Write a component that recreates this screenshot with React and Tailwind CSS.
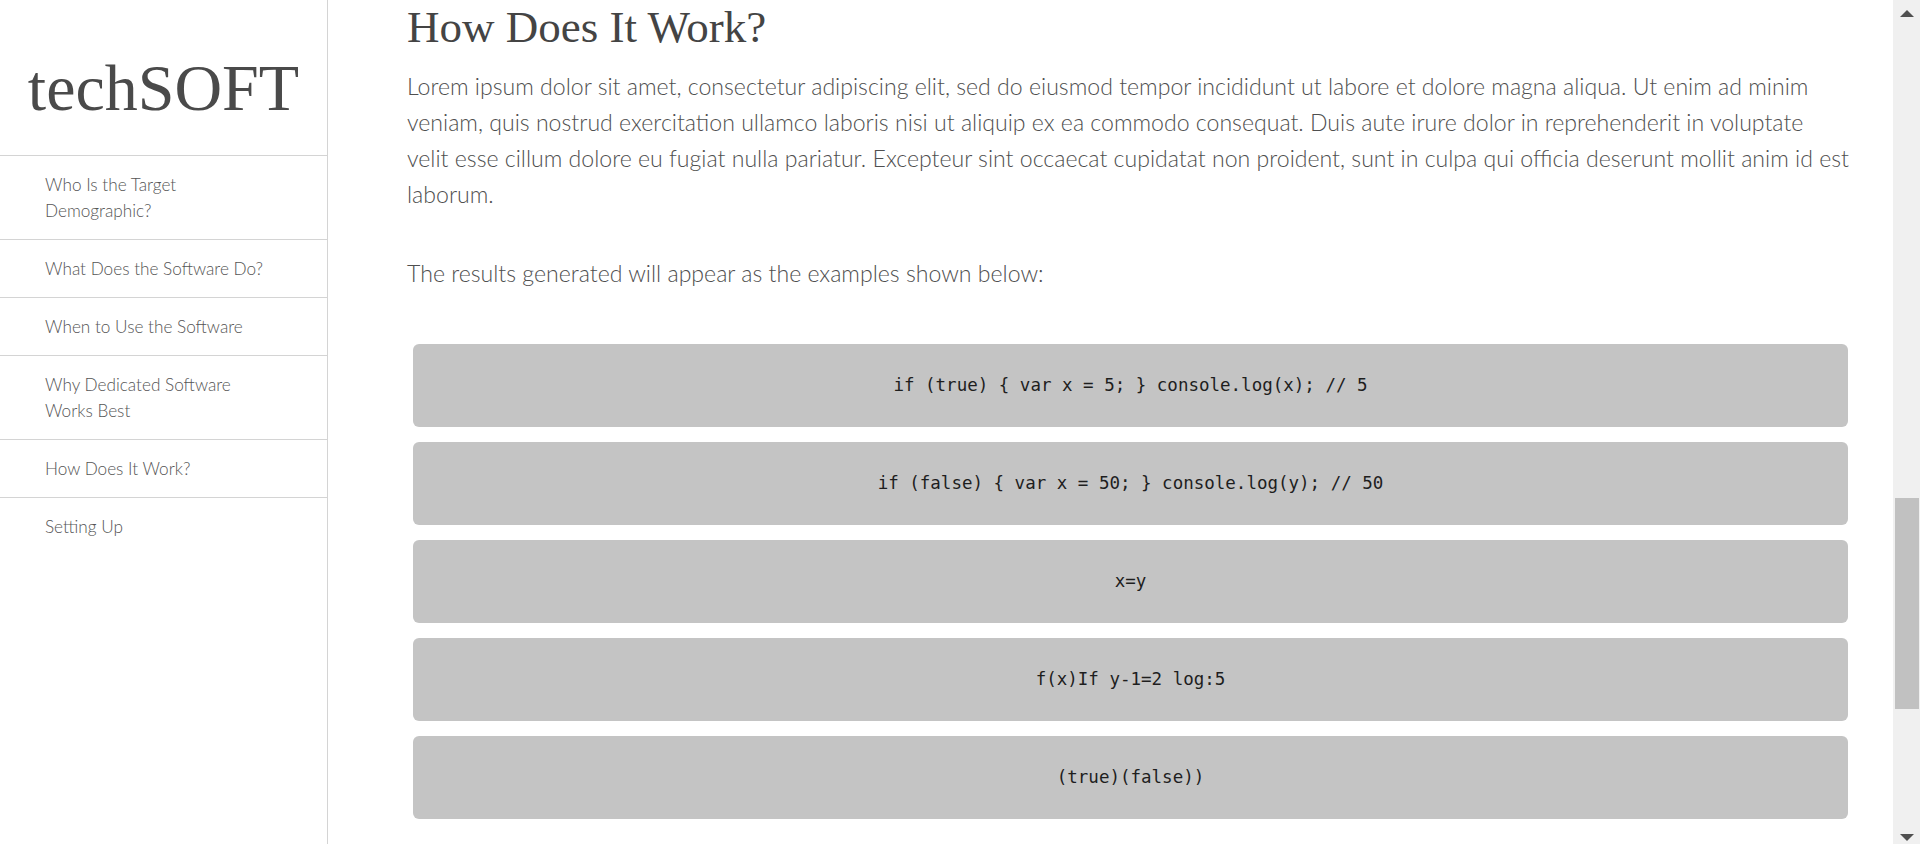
import React from 'react';

const navItems = [
    'Who Is the Target Demographic?',
    'What Does the Software Do?',
    'When to Use the Software',
    'Why Dedicated Software Works Best',
    'How Does It Work?',
    'Setting Up',
];

const examples = [
    'if (true) { var x = 5; } console.log(x); // 5',
    'if (false) { var x = 50; } console.log(y); // 50',
    'x=y',
    'f(x)If y-1=2 log:5',
    '(true)(false))',
];

function Sidebar() {
    return (
        <aside className="w-[328px] shrink-0 border-r border-[#d4d4d4] bg-white">
            {/* Logo */}
            <div className="h-[156px] border-b border-[#d4d4d4] pt-[50px] text-center">
                <span className="text-[66px] leading-[76px] text-[#4a4a4a] font-['Liberation_Serif',serif]">
                    techSOFT
                </span>
            </div>

            {/* Nav */}
            <nav>
                {navItems.map((item, idx) => (
                    <a
                        key={item}
                        href="#"
                        className={`block px-[45px] py-[15.5px] text-[17.2px] leading-[26px] font-light text-[#555] font-['Lato',sans-serif] ${
                            idx < navItems.length - 1 ? 'border-b border-[#d4d4d4]' : ''
                        }`}
                    >
                        {item}
                    </a>
                ))}
            </nav>
        </aside>
    );
}

function Scrollbar() {
    return (
        <div className="w-[27px] shrink-0 bg-[#f0f0f0] flex flex-col items-center pt-[10px] pb-[3px]">
            <svg width="14" height="7" viewBox="0 0 14 7">
                <polygon points="0,7 7,0 14,7" fill="#505050" />
            </svg>
            <div className="mt-[481px] h-[211px] w-[24px] bg-[#c1c1c1]"></div>
            <div className="flex-1"></div>
            <svg width="14" height="7" viewBox="0 0 14 7">
                <polygon points="0,0 14,0 7,7" fill="#505050" />
            </svg>
        </div>
    );
}

export default function App() {
    return (
        <div className="flex h-[844px] w-full overflow-hidden bg-white">
            <Sidebar />

            <main className="flex-1 min-w-0 pl-[79px] pr-[37px] pt-[2px] font-['Lato',sans-serif]">
                <h1 className="text-[45px] leading-[50px] text-[#444] font-['Liberation_Serif',serif]">
                    How Does It Work?
                </h1>

                <p className="mt-[16px] text-[23.1px] leading-[36px] font-light text-[#4f4f4f]">
                    Lorem ipsum dolor sit amet, consectetur adipiscing elit, sed do eiusmod tempor incididunt ut labore et dolore magna aliqua. Ut enim ad minim veniam, quis nostrud exercitation ullamco laboris nisi ut aliquip ex ea commodo consequat. Duis aute irure dolor in reprehenderit in voluptate<br />
                    velit esse cillum dolore eu fugiat nulla pariatur. Excepteur sint occaecat cupidatat non proident, sunt in culpa qui officia deserunt mollit anim id est laborum.
                </p>

                <p className="mt-[43px] text-[23.1px] leading-[36px] font-light text-[#4f4f4f]">
                    The results generated will appear as the examples shown below:
                </p>

                {/* Examples */}
                <div className="mt-[53px] ml-[6px] mr-[8px] flex flex-col gap-[15px]">
                    {examples.map((code) => (
                        <div
                            key={code}
                            className="h-[83px] rounded-[6px] bg-[#c4c4c4] flex items-center justify-center"
                        >
                            <code className="text-[17.5px] text-[#1e1e1e] whitespace-pre font-['DejaVu_Sans_Mono',monospace]">
                                {code}
                            </code>
                        </div>
                    ))}
                </div>
            </main>

            <Scrollbar />
        </div>
    );
}
